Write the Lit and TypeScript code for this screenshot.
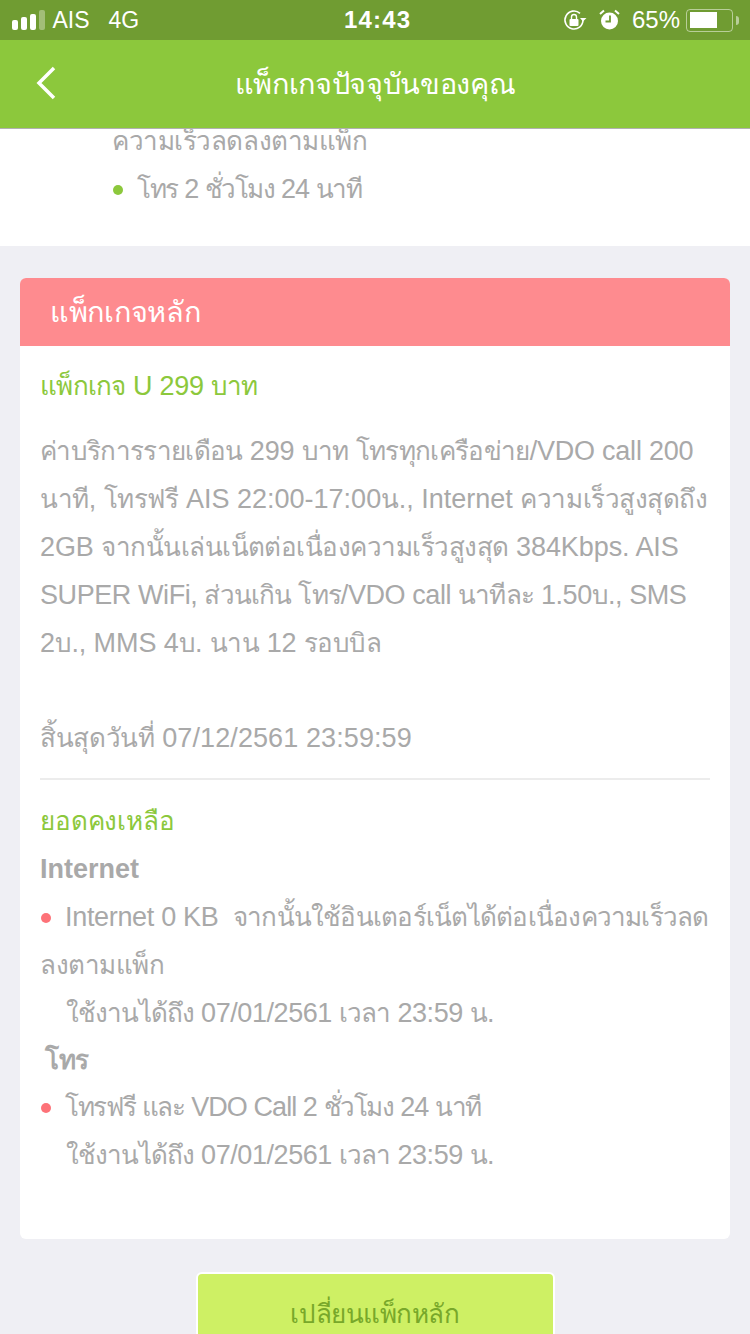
import { css, html, LitElement } from "lit";
import { customElement } from "lit/decorators.js";

// wraps Thai runs so they can be narrowed separately from the Latin text
const t = (text: string) =>
	text
		.split(/([\u0E00-\u0E7F]+)/)
		.map((part, i) => (i % 2 ? html`<span class="th">${part}</span>` : part));

@customElement("app-root")
export class AppRoot extends LitElement {
	static override styles = css`
		:host {
			display: block;
			width: 750px;
			height: 1334px;
			overflow: hidden;
			background: #efeff4;
			font-family: "Liberation Sans", "Noto Sans", sans-serif;
			font-size: 27px;
			color: #a9a9a9;
		}

		.th {
			font-size: 0.963em;
			letter-spacing: calc(-0.017em + var(--fit, 0px));
		}

		/* per-line tracking, the fallback Thai font runs wider than the original */
		.line { letter-spacing: var(--fit, 0px); }
		.fit-100 { --fit: -1px; }
		.fit-93 { --fit: -0.93px; }
		.fit-44 { --fit: -0.44px; }
		.fit-42 { --fit: -0.42px; }
		.fit-32 { --fit: -0.32px; }
		.fit-27 { --fit: -0.27px; }
		.fit-23 { --fit: -0.23px; }
		.fit-10 { --fit: -0.1px; }
		.fit-8 { --fit: -0.08px; }
		.wide-10 { --fit: 0.1px; }
		.wide-15 { --fit: 0.15px; }
		.wide-20 { --fit: 0.2px; }
		.wide-30 { --fit: 0.3px; }

		.status {
			position: relative;
			z-index: 2;
			height: 40px;
			background: #709c32;
			color: #fff;
			display: flex;
			align-items: center;
			padding: 0 11px 0 12px;
			font-size: 23px;
		}
		.signal { display: flex; align-items: flex-end; gap: 3.5px; height: 20px; margin-right: 8px; }
		.signal i { width: 5.5px; background: #fff; border-radius: 2px; display: block; }
		.signal .bar-1 { height: 10px; }
		.signal .bar-2 { height: 13px; }
		.signal .bar-3 { height: 16px; }
		.signal .bar-4 { height: 20px; background: rgba(255, 255, 255, 0.35); }
		.net { margin-left: 19px; }
		.clock { position: absolute; left: 344px; font-size: 24px; font-weight: 700; letter-spacing: 1.2px; }
		.right { margin-left: auto; display: flex; align-items: center; }
		.right svg { display: block; }
		.rotate { margin-right: 12px; }
		.alarm { margin-right: 12px; }
		.percent { font-size: 24px; margin-right: 6px; }
		.battery {
			width: 47px;
			height: 23px;
			box-sizing: border-box;
			border: 1.5px solid rgba(255, 255, 255, 0.5);
			border-radius: 4px;
			padding: 2.5px;
		}
		.battery i { display: block; width: 27px; height: 100%; background: #fff; }
		.nub { width: 3px; height: 9px; background: rgba(255, 255, 255, 0.5); margin-left: 3px; border-radius: 0 3px 3px 0; }

		.nav {
			position: relative;
			z-index: 2;
			height: 89px;
			background: #8cc83c;
			border-bottom: 1px solid #b1b1b1;
			box-sizing: border-box;
			display: flex;
			align-items: center;
			justify-content: center;
			color: #fff;
			font-size: 30px;
		}
		.back { position: absolute; left: 35px; top: 25px; }

		.content { margin-top: -12px; }
		.line { height: 48px; line-height: 48px; white-space: pre; }
		.current { background: #fff; padding: 0 0 33px 112px; }
		.dot { display: inline-block; width: 10px; height: 10px; border-radius: 50%; margin: 0 14px 0 1px; vertical-align: 3px; }
		.dot.green { background: #8cc83c; }
		.dot.red { background: #fd7278; }

		.card { margin: 32px 20px 0; background: #fff; border-radius: 6px; overflow: hidden; padding-bottom: 60px; }
		.card-head { height: 68px; line-height: 68px; background: #fe8b8f; color: #fff; padding-left: 30px; font-size: 30px; }
		.card-body { padding: 16px 20px 0; }
		.green { color: #8cc83c; }
		.name { margin-bottom: 17px; }
		.date { margin-top: 47px; }
		hr { border: 0; height: 2px; background: #ececec; margin: 16px 0 17px; }
		.bold { font-weight: 700; }
		.indent { padding-left: 26px; }
		.phone { padding-left: 5px; margin-top: -1px; }
		.call { margin-top: -1px; }

		.action { display: flex; justify-content: center; margin-top: 33px; }
		.action button {
			width: 359px;
			height: 100px;
			box-sizing: border-box;
			background: #cef064;
			border: 2px solid #fff;
			border-radius: 6px;
			color: #78a82a;
			font: inherit;
			padding: 0 0 18px;
		}
	`;

	override render() {
		return html`
			<div class="status">
				<div class="signal">
					<i class="bar-1"></i><i class="bar-2"></i><i class="bar-3"></i><i class="bar-4"></i>
				</div>
				<span>AIS</span><span class="net">4G</span>
				<span class="clock">14:43</span>
				<div class="right">
					<svg class="rotate" width="24" height="22" viewBox="0 0 24 22" fill="none">
						<path d="M20 11a9 9 0 1 1-3-6.7" stroke="#fff" stroke-width="1.6" />
						<path d="M17 9l3 3.5 3.5-3.5z" fill="#fff" />
						<rect x="6.5" y="10" width="9" height="7" rx="1" fill="#fff" />
						<path d="M8.5 10V8a2.5 2.5 0 0 1 5 0v2" stroke="#fff" stroke-width="1.4" />
					</svg>
					<svg class="alarm" width="21" height="22" viewBox="0 0 21 22">
						<circle cx="10.5" cy="12" r="8.5" fill="#fff" />
						<path d="M11 6.5v6H6.5" stroke="#709c32" stroke-width="1.8" fill="none" />
						<path d="M1 5l4-3.5M20 5l-4-3.5" stroke="#fff" stroke-width="2" />
					</svg>
					<span class="percent">65%</span>
					<div class="battery"><i></i></div>
					<div class="nub"></div>
				</div>
			</div>
			<div class="nav wide-15">
				<svg class="back" width="22" height="36" viewBox="0 0 22 36" fill="none">
					<path d="M19 3L4 18l15 15" stroke="#fff" stroke-width="3.5" />
				</svg>
				${t("แพ็กเกจปัจจุบันของคุณ")}
			</div>
			<div class="content">
				<section class="current">
					<div class="line">${t("ความเร็วลดลงตามแพ็ก")}</div>
					<div class="line fit-100"><span class="dot green"></span>${t("โทร 2 ชั่วโมง 24 นาที")}</div>
				</section>
				<section class="card">
					<div class="card-head wide-20">${t("แพ็กเกจหลัก")}</div>
					<div class="card-body">
						<div class="line green name fit-27">${t("แพ็กเกจ U 299 บาท")}</div>
						<div class="line fit-23">${t("ค่าบริการรายเดือน 299 บาท โทรทุกเครือข่าย/VDO call 200")}</div>
						<div class="line">${t("นาที, โทรฟรี AIS 22:00-17:00น., Internet ความเร็วสูงสุดถึง")}</div>
						<div class="line fit-8">${t("2GB จากนั้นเล่นเน็ตต่อเนื่องความเร็วสูงสุด 384Kbps. AIS")}</div>
						<div class="line fit-42">${t("SUPER WiFi, ส่วนเกิน โทร/VDO call นาทีละ 1.50บ., SMS")}</div>
						<div class="line fit-10">${t("2บ., MMS 4บ. นาน 12 รอบบิล")}</div>
						<div class="line date wide-10">${t("สิ้นสุดวันที่ 07/12/2561 23:59:59")}</div>
						<hr />
						<div class="line green wide-30">${t("ยอดคงเหลือ")}</div>
						<div class="line bold">Internet</div>
						<div class="line fit-32"><span class="dot red"></span>${t("Internet 0 KB  จากนั้นใช้อินเตอร์เน็ตได้ต่อเนื่องความเร็วลด")}</div>
						<div class="line">${t("ลงตามแพ็ก")}</div>
						<div class="line indent fit-44">${t("ใช้งานได้ถึง 07/01/2561 เวลา 23:59 น.")}</div>
						<div class="line bold phone">${t("โทร")}</div>
						<div class="line call fit-93"><span class="dot red"></span>${t("โทรฟรี และ VDO Call 2 ชั่วโมง 24 นาที")}</div>
						<div class="line indent fit-44">${t("ใช้งานได้ถึง 07/01/2561 เวลา 23:59 น.")}</div>
					</div>
				</section>
				<div class="action"><button>${t("เปลี่ยนแพ็กหลัก")}</button></div>
			</div>
		`;
	}
}
